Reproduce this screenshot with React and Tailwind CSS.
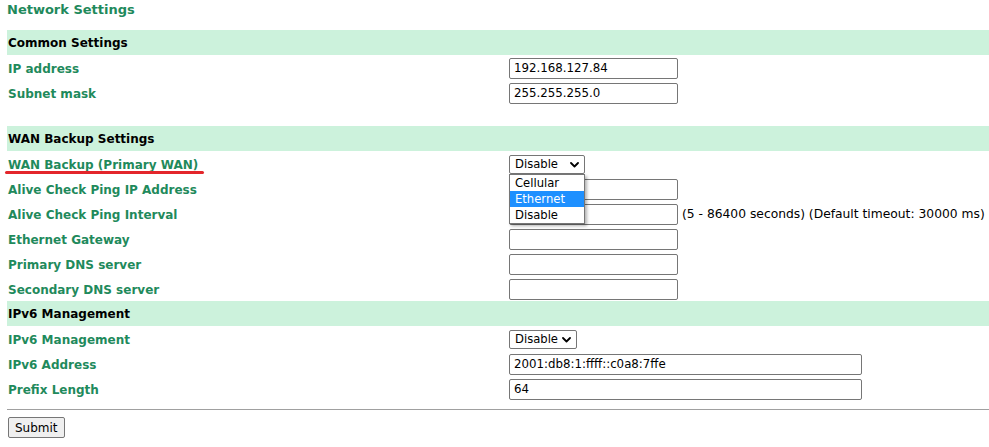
import React from 'react';

const green = 'text-[#1f8a5c]';

function Chevron() {
  return (
    <svg width="9" height="6" viewBox="0 0 9 6" className="shrink-0">
      <path d="M1 1l3.5 3.5L8 1" fill="none" stroke="#000" strokeWidth="1.8" strokeLinecap="round" strokeLinejoin="round" />
    </svg>
  );
}

function Field({ value = '', wide = false }) {
  return (
    <div className={`mt-[2px] flex h-[21px] items-center rounded-[2px] border border-[#767676] bg-white px-[4px] text-[11.8px] text-black ${wide ? 'w-[353px]' : 'w-[169px]'}`}>
      {value}
    </div>
  );
}

function Select({ value, width, open }) {
  return (
    <div className="relative mt-[2px]">
      <div className={`flex h-[19px] items-center justify-between rounded-[2px] border border-[#767676] bg-white pl-[5px] pr-[5px] text-[11.6px] text-black ${width}`}>
        <span>{value}</span>
        <Chevron />
      </div>
      {open && (
        <div className="absolute left-0 top-[19px] z-10 w-[76px] border border-[#767676] bg-white text-[11.6px] text-black shadow-[2px_2px_3px_rgba(0,0,0,0.3)]">
          <div className="h-[16px] px-[5px] leading-[16px]">Cellular</div>
          <div className="h-[16px] bg-[#1e90ff] px-[5px] leading-[16px] text-white">Ethernet</div>
          <div className="h-[16px] px-[5px] leading-[16px]">Disable</div>
        </div>
      )}
    </div>
  );
}

function Band({ children }) {
  return (
    <div className="flex h-[25px] items-center bg-[#ccf2dc] pl-[1px] pt-[1px] text-[12px] font-bold text-black">{children}</div>
  );
}

function Row({ label, children, mark }) {
  return (
    <div className="grid h-[25px] grid-cols-[502px_1fr] items-center">
      <div className={`relative pl-[1px] pt-[3px] text-[12px] font-bold ${green}`}>
        {label}
        {mark && <div className="absolute left-[-2px] top-[18px] h-[3px] w-[199px] rounded-full bg-[#e3262b]" />}
      </div>
      <div className="flex items-center">{children}</div>
    </div>
  );
}

export default function App() {
  return (
    <div className="min-h-[447px] bg-white pl-[7px] pt-[1px] font-['DejaVu_Sans','Verdana',sans-serif]">
      <div className={`h-[18px] text-[13px] font-bold leading-[18px] ${green}`}>Network Settings</div>
      <div className="mt-[11px]">
        <Band>Common Settings</Band>
        <Row label="IP address"><Field value="192.168.127.84" /></Row>
        <Row label="Subnet mask"><Field value="255.255.255.0" /></Row>
        <div className="h-[21px]" />
        <Band>WAN Backup Settings</Band>
        <Row label="WAN Backup (Primary WAN)" mark>
          <Select value="Disable" width="w-[76px]" open />
        </Row>
        <Row label="Alive Check Ping IP Address"><Field /></Row>
        <Row label="Alive Check Ping Interval">
          <Field />
          <span className="ml-[4px] mt-[2px] text-[12.3px] text-black">(5 - 86400 seconds) (Default timeout: 30000 ms)</span>
        </Row>
        <Row label="Ethernet Gateway"><Field /></Row>
        <Row label="Primary DNS server"><Field /></Row>
        <Row label="Secondary DNS server"><Field /></Row>
        <Band>IPv6 Management</Band>
        <Row label="IPv6 Management">
          <Select value="Disable" width="w-[68px]" />
        </Row>
        <Row label="IPv6 Address"><Field value="2001:db8:1:ffff::c0a8:7ffe" wide /></Row>
        <Row label="Prefix Length"><Field value="64" wide /></Row>
      </div>
      <div className="mt-[8px] border-t border-[#a0a0a0]" />
      <button className="ml-[1px] mt-[7px] h-[21px] rounded-[2px] border border-[#767676] bg-[#efefef] px-[6px] text-[12px] text-black">
        Submit
      </button>
    </div>
  );
}
